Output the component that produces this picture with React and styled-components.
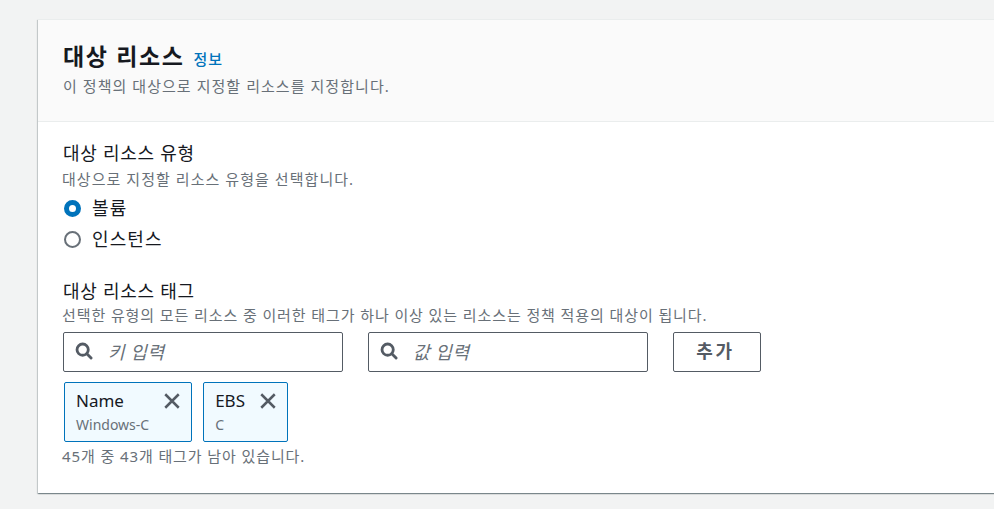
import React from "react";
import styled, { createGlobalStyle } from "styled-components";

const Global = createGlobalStyle`
  html, body { margin: 0; padding: 0; }
  body {
    background: #f2f3f3;
    font-family: "Noto Sans", "Noto Sans CJK KR", sans-serif;
    color: #16191f;
    overflow: hidden;
    width: 994px;
    height: 509px;
  }
`;

const Page = styled.div`
  padding: 19px 0 0 38px;
`;

const Card = styled.section`
  width: 1100px;
  background: #fff;
  box-shadow: 0 1px 1px 0 rgba(0, 28, 36, 0.3), 1px 1px 1px 0 rgba(0, 28, 36, 0.15),
    -1px 1px 1px 0 rgba(0, 28, 36, 0.15);
  border-top: 1px solid #eaeded;
`;

const Header = styled.div`
  background: #fafafa;
  border-bottom: 1px solid #eaeded;
  padding: 20px 25px 23px;
`;

const TitleRow = styled.div`
  display: flex;
  align-items: baseline;
  gap: 9px;
`;

const Title = styled.h2`
  margin: 0;
  font-size: 23px;
  font-weight: 700;
  line-height: 32px;
  letter-spacing: 0.07em;
`;

const InfoLink = styled.a`
  color: #0073bb;
  font-size: 15px;
  font-weight: 500;
  letter-spacing: 0.07em;
  text-decoration: none;
`;

const Desc = styled.p`
  margin: ${(p) => p.$mt || "0"} 0 0;
  font-size: 15px;
  line-height: 24px;
  color: #687078;
  letter-spacing: ${(p) => p.$ls || "0.07em"};
`;

const Body = styled.div`
  padding: 18px 24px 26px;
  display: flex;
  flex-direction: column;
  gap: 26px;
`;

const Field = styled.div`
  display: flex;
  flex-direction: column;
`;

const Label = styled.div`
  font-size: 18px;
  line-height: 26px;
  color: #16191f;
  letter-spacing: 0.04em;
  padding-left: 1px;
`;

const RadioGroup = styled.div`
  display: flex;
  flex-direction: column;
  gap: 5px;
  margin-top: 4px;
`;

const RadioRow = styled.label`
  display: flex;
  align-items: center;
  gap: 11px;
  font-size: 18px;
  line-height: 26px;
  letter-spacing: 0.06em;
  padding-left: 2px;
`;

const RadioDot = styled.span`
  width: 17px;
  height: 17px;
  box-sizing: border-box;
  border-radius: 50%;
  border: ${(p) => (p.$checked ? "5px solid #0073bb" : "2px solid #687078")};
  background: #fff;
`;

const InputRow = styled.div`
  display: flex;
  gap: 25px;
  margin-top: 5px;
  padding-left: 1px;
`;

const SearchBox = styled.div`
  width: 280px;
  height: 40px;
  box-sizing: border-box;
  border: 1px solid #545b64;
  border-radius: 2px;
  display: flex;
  align-items: center;
  gap: 15px;
  padding: 0 11px 2px;
  font-size: 18px;
  color: #687078;
  font-style: italic;
  letter-spacing: 0.03em;
`;

const Button = styled.button`
  width: 88px;
  height: 40px;
  border: 1px solid #545b64;
  border-radius: 2px;
  background: #fff;
  color: #545b64;
  font-family: inherit;
  font-size: 18px;
  font-weight: 700;
  letter-spacing: 0.15em;
  padding: 0 3px 4px 0;
  display: flex;
  align-items: center;
  justify-content: center;
`;

const Tokens = styled.div`
  display: flex;
  gap: 11px;
  margin-top: 10px;
  padding-left: 2px;
`;

const Token = styled.div`
  height: 60px;
  box-sizing: border-box;
  border: 1px solid #0073bb;
  border-radius: 2px;
  background: #f1faff;
  padding: 6px 10px 0 11px;
  display: flex;
  gap: 14px;
  align-items: flex-start;
`;

const TokenText = styled.div`
  display: flex;
  flex-direction: column;
`;

const TokenKey = styled.div`
  font-size: 17px;
  line-height: 24px;
  color: #16191f;
`;

const TokenVal = styled.div`
  font-size: 14px;
  line-height: 24px;
  color: #687078;
`;

const CloseBtn = styled.span`
  margin-top: 3px;
  display: flex;
`;

const Hint = styled.div`
  font-size: 15px;
  line-height: 22px;
  color: #687078;
  margin-top: 3px;
  letter-spacing: 0.06em;
`;

const SearchIcon = () => (
  <svg width="18" height="18" viewBox="0 0 16 16" fill="none" stroke="#545b64" strokeWidth="2.5">
    <circle cx="6.8" cy="6.8" r="5" />
    <path d="M10.5 10.5 L14.3 14.3" strokeLinecap="round" />
  </svg>
);

const XIcon = () => (
  <svg width="18" height="18" viewBox="0 0 16 16" fill="none" stroke="#545b64" strokeWidth="2.2">
    <path d="M2 2 L14 14 M14 2 L2 14" />
  </svg>
);

const tags = [
  { key: "Name", value: "Windows-C" },
  { key: "EBS", value: "C" },
];

export default function App() {
  return (
    <>
      <Global />
      <Page>
        <Card>
          <Header>
            <TitleRow>
              <Title>대상 리소스</Title>
              <InfoLink href="#">정보</InfoLink>
            </TitleRow>
            <Desc $mt="2px">이 정책의 대상으로 지정할 리소스를 지정합니다.</Desc>
          </Header>
          <Body>
            <Field>
              <Label>대상 리소스 유형</Label>
              <Desc $mt="1px">대상으로 지정할 리소스 유형을 선택합니다.</Desc>
              <RadioGroup>
                <RadioRow>
                  <RadioDot $checked />
                  볼륨
                </RadioRow>
                <RadioRow>
                  <RadioDot />
                  인스턴스
                </RadioRow>
              </RadioGroup>
            </Field>
            <Field>
              <Label>대상 리소스 태그</Label>
              <Desc $mt="-1px" $ls="0.06em">
                선택한 유형의 모든 리소스 중 이러한 태그가 하나 이상 있는 리소스는 정책 적용의 대상이 됩니다.
              </Desc>
              <InputRow>
                <SearchBox>
                  <SearchIcon />키 입력
                </SearchBox>
                <SearchBox>
                  <SearchIcon />값 입력
                </SearchBox>
                <Button>추가</Button>
              </InputRow>
              <Tokens>
                {tags.map((t) => (
                  <Token key={t.key}>
                    <TokenText>
                      <TokenKey>{t.key}</TokenKey>
                      <TokenVal>{t.value}</TokenVal>
                    </TokenText>
                    <CloseBtn>
                      <XIcon />
                    </CloseBtn>
                  </Token>
                ))}
              </Tokens>
              <Hint>45개 중 43개 태그가 남아 있습니다.</Hint>
            </Field>
          </Body>
        </Card>
      </Page>
    </>
  );
}
